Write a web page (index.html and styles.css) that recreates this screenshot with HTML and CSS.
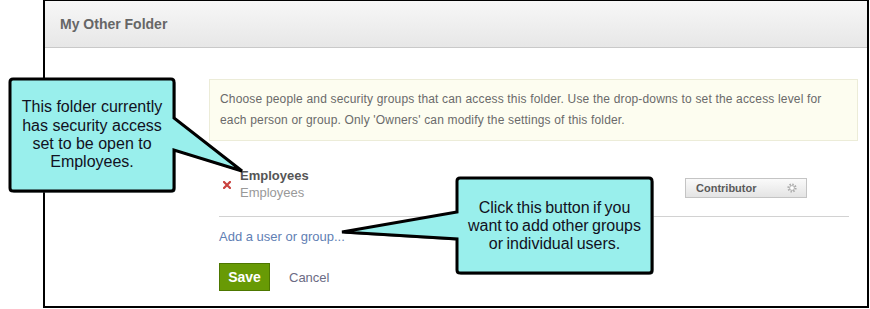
FILE: index.html
```html
<!DOCTYPE html>
<html lang="en">
<head>
    <meta charset="UTF-8">
    <meta name="viewport" content="width=device-width, initial-scale=1.0">
    <title>My Other Folder</title>
    <link rel="stylesheet" href="styles.css">
</head>
<body>
    <div class="frame">
        <div class="header">
            <h1 class="title">My Other Folder</h1>
        </div>

        <div class="content">
            <div class="notice">
                Choose people and security groups that can access this folder. Use the drop-downs to set the access level for each person or group. Only 'Owners' can modify the settings of this folder.
            </div>

            <div class="members">
                <div class="member">
                    <span class="remove">
                        <svg width="8" height="8" viewBox="0 0 8 8">
                            <path d="M1 1 L7 7 M7 1 L1 7" stroke="#c9423f" stroke-width="2.2" stroke-linecap="square"/>
                        </svg>
                    </span>
                    <div class="member-name">
                        <div class="name">Employees</div>
                        <div class="sub">Employees</div>
                    </div>
                    <div class="access">
                        <span>Contributor</span>
                        <svg width="10" height="10" viewBox="0 0 10 10">
                            <circle cx="5" cy="5" r="3.6" fill="none" stroke="#aaa" stroke-width="2" stroke-dasharray="1.4 1.4"/>
                            <circle cx="5" cy="5" r="2.4" fill="#fff" stroke="#aaa" stroke-width="0.9"/>
                        </svg>
                    </div>
                </div>

                <a class="add-link" href="#">Add a user or group...</a>

                <div class="actions">
                    <button class="save">Save</button>
                    <a class="cancel" href="#">Cancel</a>
                </div>
            </div>
        </div>
    </div>

    <!-- annotation callouts drawn over the screenshot -->
    <svg class="callouts" width="870" height="309" viewBox="0 0 870 309">
        <g fill="#5a6a6a" transform="translate(1.5 1.5)">
            <path d="M13 79 H171 Q174 79 174 82 V118 L242 171 L174 150 V188 Q174 191 171 191 H13 Q10 191 10 188 V82 Q10 79 13 79 Z"/>
            <path d="M460 178 H649 Q652 178 652 181 V270 Q652 273 649 273 H460 Q457 273 457 270 V239 L342 232 L457 212 V181 Q457 178 460 178 Z"/>
        </g>
        <g fill="#99efec" stroke="#000" stroke-width="3" stroke-linejoin="miter">
            <path d="M13 79 H171 Q174 79 174 82 V118 L242 171 L174 150 V188 Q174 191 171 191 H13 Q10 191 10 188 V82 Q10 79 13 79 Z"/>
            <path d="M460 178 H649 Q652 178 652 181 V270 Q652 273 649 273 H460 Q457 273 457 270 V239 L342 232 L457 212 V181 Q457 178 460 178 Z"/>
        </g>
    </svg>

    <div class="callout callout-folder">This folder currently has security access set to be open to Employees.</div>
    <div class="callout callout-add">Click this button if you want to add other groups or individual users.</div>
</body>
</html>
```

FILE: styles.css
```css
* {
    margin: 0;
    padding: 0;
    box-sizing: border-box;
    font-family: 'Liberation Sans', Arial, sans-serif;
}

body {
    width: 870px;
    height: 309px;
    background: #fff;
    position: relative;
    overflow: hidden;
}

.frame {
    margin-left: 43px;
    width: 826px;
    height: 308px;
    border: 2px solid #000;
    border-top-width: 1px;
}

.header {
    height: 47px;
    background: linear-gradient(to bottom, #f7f7f7 0%, #e7e7e7 100%);
    border-bottom: 1px solid #c9c9c9;
    padding-left: 15px;
    display: flex;
    align-items: center;
}

.title {
    font-size: 14px;
    font-weight: bold;
    color: #666;
}

.content {
    padding: 31px 9px 0 164px;
}

.notice {
    background: #fdfdf0;
    border: 1px solid #ececd8;
    padding: 9px 20px 9px 10px;
    font-size: 12px;
    line-height: 21px;
    letter-spacing: 0.17px;
    color: #6a6a6a;
}

.members {
    padding: 0 9px 0 10px;
}

.member {
    display: flex;
    align-items: flex-start;
    padding: 26px 0 15px;
    border-bottom: 1px solid #d2d2d2;
}

.remove {
    width: 21px;
    padding: 14px 0 0 4px;
    line-height: 0;
}

.member-name {
    flex: 1;
    font-size: 13px;
    line-height: 17px;
}

.name {
    font-weight: bold;
    color: #555;
}

.sub {
    color: #999;
}

.access {
    width: 122px;
    height: 20px;
    margin: 11px 42px 0 0;
    border: 1px solid #c4c4c4;
    background: linear-gradient(to bottom, #fafafa 0%, #e4e4e4 100%);
    display: flex;
    align-items: center;
    justify-content: space-between;
    padding: 0 9px 0 10px;
    font-size: 11px;
    font-weight: bold;
    color: #5a5a5a;
}

.add-link {
    display: block;
    margin-top: 11px;
    font-size: 13px;
    line-height: 17px;
    color: #5f80b4;
    text-decoration: none;
}

.actions {
    display: flex;
    align-items: center;
    gap: 19px;
    margin-top: 18px;
}

.save {
    width: 51px;
    height: 28px;
    background: #689a05;
    border: 1px solid #4d7700;
    color: #fff;
    font-size: 14px;
    font-weight: bold;
}

.cancel {
    font-size: 13px;
    color: #6b6b84;
    text-decoration: none;
}

.callouts {
    position: absolute;
    left: 0;
    top: 0;
}

.callout {
    position: absolute;
    display: flex;
    align-items: center;
    justify-content: center;
    text-align: center;
    font-size: 16px;
    line-height: 18.3px;
    color: #111122;
}

.callout-folder {
    left: 10px;
    top: 79px;
    width: 164px;
    height: 112px;
    padding: 0 10px;
}

.callout-add {
    left: 457px;
    top: 178px;
    width: 195px;
    height: 95px;
    padding: 0 8px;
    line-height: 18px;
    word-spacing: -1px;
}
```
